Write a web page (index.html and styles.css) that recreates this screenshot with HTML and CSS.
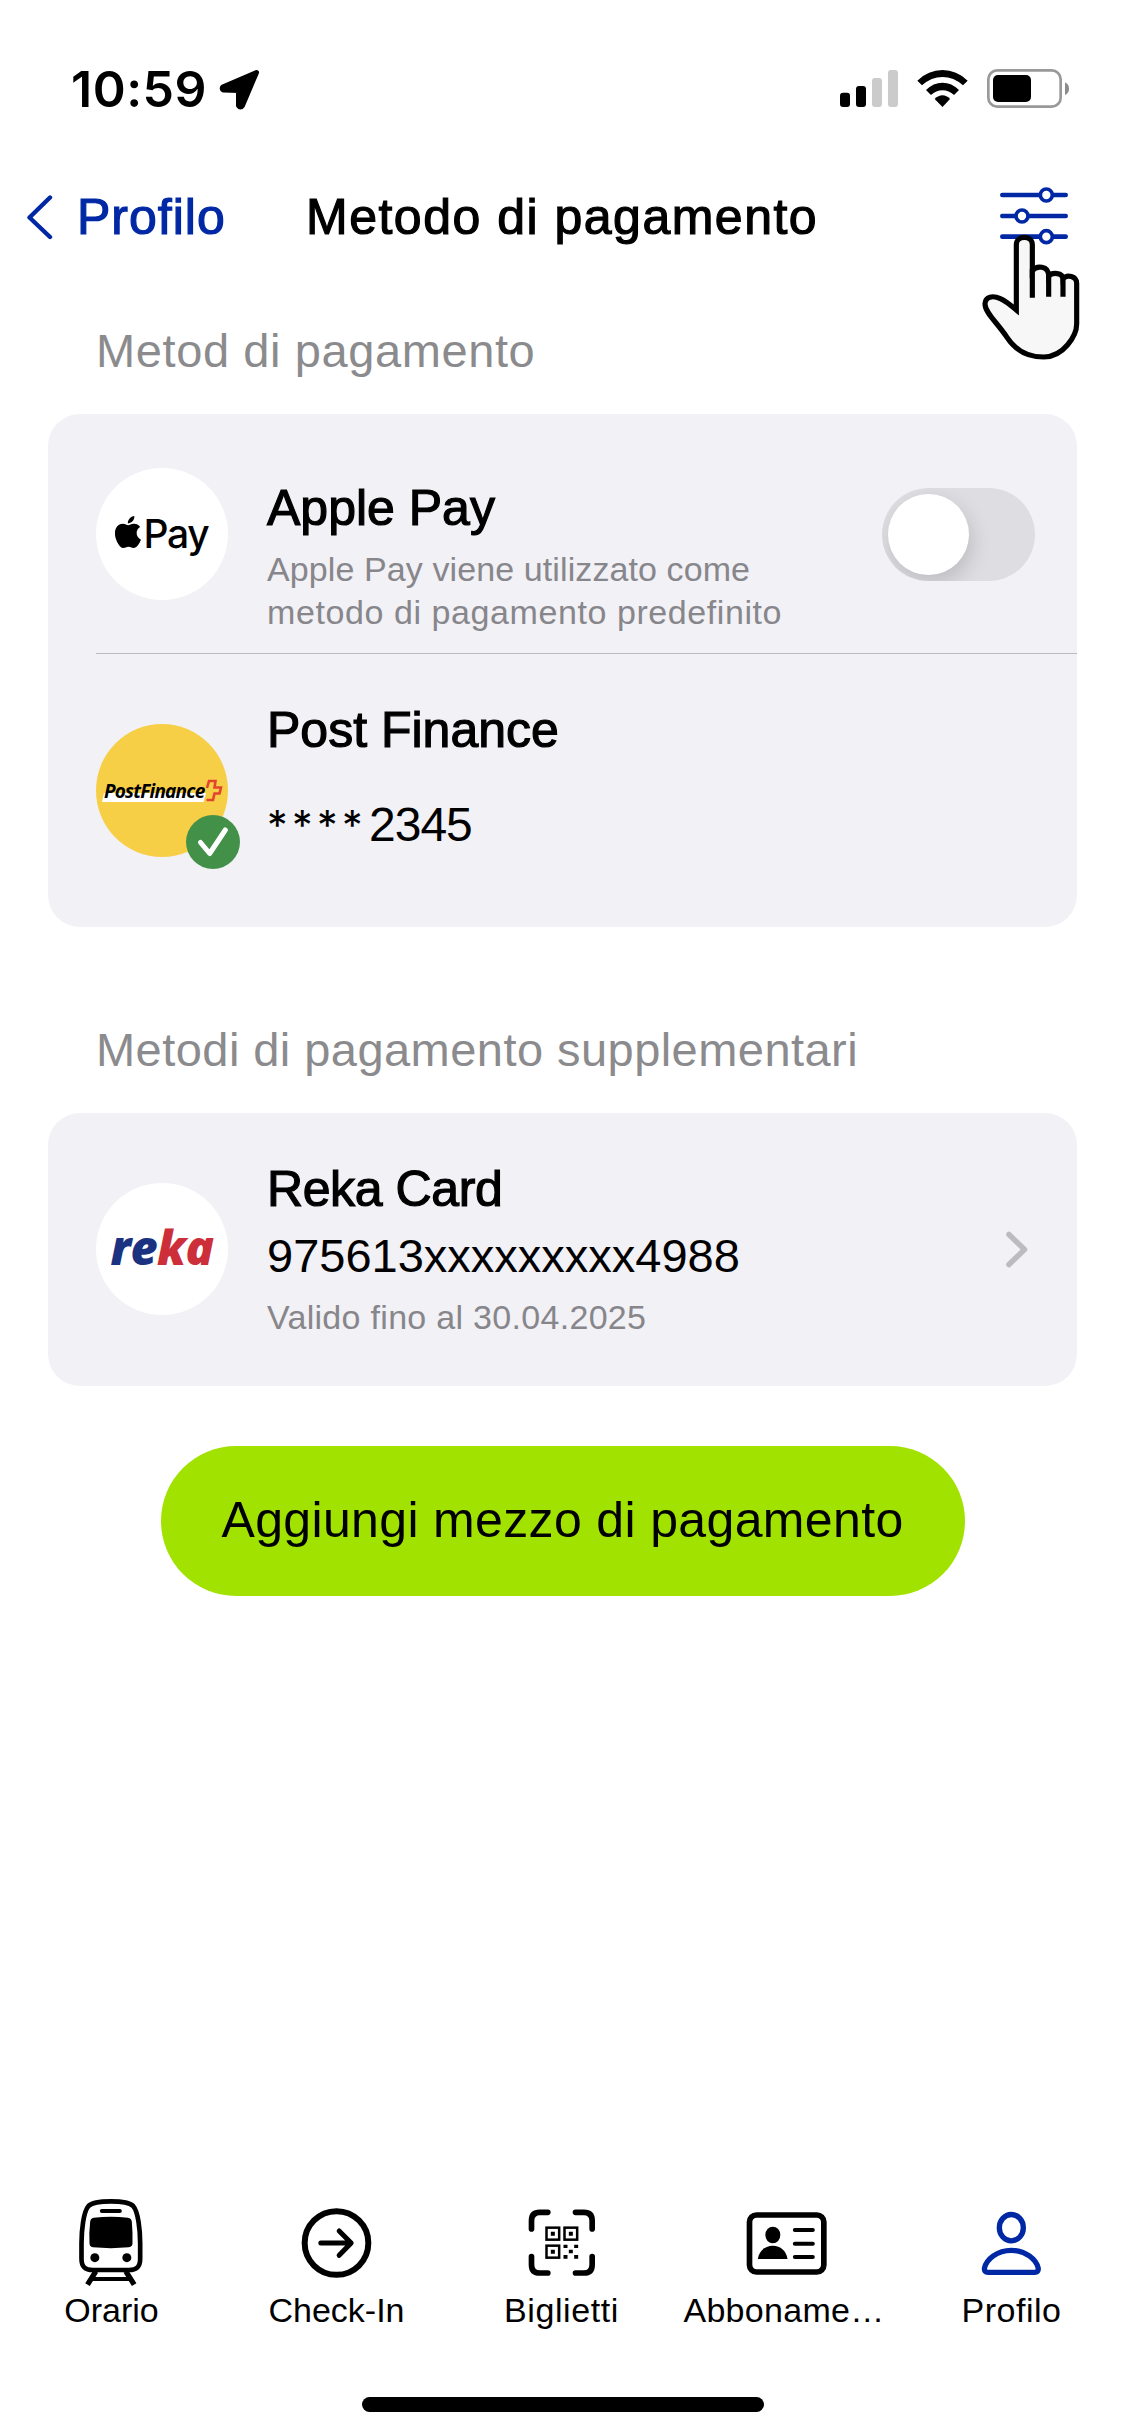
FILE: index.html
```html
<!DOCTYPE html>
<html lang="it">
<head>
<meta charset="utf-8">
<title>Metodo di pagamento</title>
<link rel="stylesheet" href="styles.css">
</head>
<body>
<div class="screen">
  <header class="status">
    <span class="time">10:59</span>
    <svg class="locate" width="41" height="41" viewBox="219 69 41 41"><path d="M256.500 72.500 L222.700 87 Q221.500 89 223.500 90 L238.500 90.500 V105.500 Q240.500 108.500 242.500 105.500Z" fill="#000" stroke="#000" stroke-width="5" stroke-linejoin="round"/></svg>
    <svg class="signal" width="58" height="37" viewBox="120 90 174 111"><g fill="#000"><rect x="120" y="158" width="30" height="43" rx="9"/><rect x="168" y="138" width="30" height="63" rx="9"/></g><g fill="#cbcbcb"><rect x="216" y="114" width="30" height="87" rx="9"/><rect x="264" y="90" width="30" height="111" rx="9"/></g></svg>
    <svg class="wifi" width="51" height="37" viewBox="351 90 153 111"><path d="M352 122 Q385 90 427.500 90 T503 122 L489 136 Q461 111 427.500 111 T366 136Z"/><path d="M378 150 Q400 128 427.500 128 T477 150 L462 165 Q447 151 427.500 151 T393 165Z"/><path d="M404 177 Q415 166 427.500 166 T450 177 L427.500 201Z"/></svg>
    <svg width="83" height="39" viewBox="561 87 249 117"><rect x="565" y="91" width="217" height="109" rx="27" fill="none" stroke="#999" stroke-width="8"/><rect x="579" y="105" width="114" height="81" rx="15"/><path d="M795 127 Q807 133 807 146 T795 165Z" fill="#8c8c8c"/></svg>
  </header>

  <nav class="navbar">
    <a class="back">
      <svg width="28" height="46" viewBox="25 193 28 46"><path d="M50 196.500 L29.500 216.500 L50 236" fill="none" stroke="#0028a5" stroke-width="4.400" stroke-linecap="round" stroke-linejoin="round"/></svg>
      <span>Profilo</span>
    </a>
    <h1>Metodo di pagamento</h1>
    <div class="filter">
      <svg width="68" height="58" viewBox="600 439 204 174"><g fill="#fff" stroke="#0028a5" stroke-width="14" stroke-linecap="round"><path d="M607 463H797M607 526H797M607 588H797"/><g stroke-width="11"><circle cx="739" cy="463" r="18"/><circle cx="666" cy="526" r="18"/><circle cx="739" cy="588" r="18"/></g></g></svg>
      <svg class="pointer" width="98" height="127" viewBox="545 580 294 381"><g stroke="#000" stroke-width="15.500"><path fill="#f7f7f7" stroke-miterlimit="6" d="M648 808 V612 C648 583 696 583 696 612 V690 C708 674 745 674 745 706 C756 694 787 696 788 714 C800 700 829 706 829 728 V850 C829 884 790 949 730 949 C675 949 641 922 620 890 C590 845 553 815 554 789 C555 768 577 763 600 774 C618 782 636 798 648 808Z"/><path fill="none" d="M696 685V771M745 700V768M788 708V768"/></g></svg>
    </div>
  </nav>

  <section>
    <h2 class="first">Metod di pagamento</h2>
    <div class="card">
      <div class="row apple">
        <div class="logo applepay">
          <svg width="26" height="32" viewBox="2.300 0 19.500 24"><path d="M12.152 6.896c-.948 0-2.415-1.078-3.96-1.04-2.04.027-3.91 1.183-4.961 3.014-2.117 3.675-.546 9.103 1.519 12.09 1.013 1.454 2.208 3.09 3.792 3.039 1.520-.065 2.090-.987 3.935-.987 1.831 0 2.350.987 3.960.948 1.637-.026 2.676-1.480 3.676-2.948 1.156-1.688 1.636-3.325 1.662-3.415-.039-.013-3.182-1.221-3.220-4.857-.026-3.040 2.480-4.494 2.597-4.559-1.429-2.090-3.623-2.324-4.390-2.376-2-.156-3.675 1.090-4.610 1.090zM15.530 3.830c.843-1.012 1.400-2.427 1.245-3.830-1.207.052-2.662.805-3.532 1.818-.780.896-1.454 2.338-1.273 3.714 1.338.104 2.715-.688 3.559-1.701"/></svg>
          <span>Pay</span>
        </div>
        <div class="info">
          <h3>Apple Pay</h3>
          <p class="note"><span class="tight">Apple Pay viene utilizzato come</span><span class="loose">metodo di pagamento predefinito</span></p>
        </div>
        <div class="toggle"><div class="knob"></div></div>
      </div>
      <div class="row">
        <div class="logo postfinance">
          <svg class="plate" width="104" height="9" viewBox="0 0 104 9"><path d="M2 0H104L101.500 9H0Z" fill="#fff"/></svg>
          <span>PostFinance</span>
          <svg class="cross" width="18" height="23" viewBox="0 0 18 23"><path d="M2 9 L4 2 H10.500 L9.500 8.500 H16 L14.500 14.500 H9.500 L8 21 H1.500" fill="none" stroke="#e2452f" stroke-width="2.600"/></svg>
          <svg class="check" width="54" height="54" viewBox="0 0 54 54"><circle cx="27" cy="27" r="27" fill="#439149"/><path d="M14.500 27.500 L23.700 38.500 L39.300 15" fill="none" stroke="#fff" stroke-width="5" stroke-linecap="round" stroke-linejoin="round"/></svg>
        </div>
        <div class="info">
          <h3>Post Finance</h3>
          <p class="number masked"><span class="stars">****</span>2345</p>
        </div>
      </div>
    </div>
  </section>

  <section>
    <h2>Metodi di pagamento supplementari</h2>
    <div class="card">
      <div class="row">
        <div class="logo reka"><span><b class="re">re</b><b class="ka">ka</b></span></div>
        <div class="info">
          <h3 class="narrow">Reka Card</h3>
          <p class="number">975613xxxxxxxxx4988</p>
          <p class="note valid">Valido fino al 30.04.2025</p>
        </div>
        <svg class="chevron" width="22" height="37" viewBox="0 0 22 37"><path d="M3 3.500 L18.500 18.500 L3 33.500" fill="none" stroke="#bcbbc0" stroke-width="5.500" stroke-linecap="round" stroke-linejoin="round"/></svg>
      </div>
    </div>
  </section>

  <button class="add">Aggiungi mezzo di pagamento</button>

  <footer class="tabs">
    <a class="tab">
      <svg width="90" height="92" viewBox="82.500 48 270 276"><g fill="none" stroke="#000" stroke-width="14"><path d="M214 64 C250 64 270 67 281 78 C296 95 302 150 302 190 V236 C302 260 292 270 268 270 H160 C136 270 126 260 126 236 V190 C126 150 132 95 147 78 C158 67 178 64 214 64Z"/><path d="M187 93H241" stroke-linecap="round" stroke-width="12"/><path d="M169 274L144 314M259 274L284 314" stroke-width="16"/><path d="M157 297H271" stroke-width="12"/></g><path d="M163 113 Q214 108 265 113 Q276 114 277 125 Q280 160 279 190 Q279 200 268 202 Q214 207 160 202 Q150 200 150 190 Q148 160 152 125 Q153 114 163 113Z"/><circle cx="166" cy="233" r="13.500"/><circle cx="262" cy="233" r="13.500"/></svg>
      <span>Orario</span>
    </a>
    <a class="tab">
      <svg width="90" height="92" viewBox="757.500 48 270 276"><g fill="none" stroke="#000" stroke-width="18" stroke-linecap="round"><circle cx="891" cy="189" r="95.500"/><path d="M844 189H933M899 153L935 189L899 226" stroke-width="15" stroke-linejoin="round"/></g></svg>
      <span>Check-In</span>
    </a>
    <a class="tab t3">
      <svg width="90" height="92" viewBox="172.500 48 270 276"><g fill="none" stroke="#000"><path d="M216 147V122Q216 97 241 97H265M348 97H373Q398 97 398 122V147M216 230V254Q216 279 241 279H265M348 279H373Q398 279 398 254V230" stroke-width="17" stroke-linecap="round"/><g stroke-width="7.500"><rect x="261" y="143" width="38" height="36"/><rect x="315" y="143" width="38" height="36"/><rect x="261" y="197" width="38" height="36"/></g></g><path d="M274 155h12v12h-12zM328 155h12v12h-12zM274 209h12v12h-12zM312 194h12v10h-12zM344 194h12v10h-12zM328 209h12v11h-12zM312 225h12v11h-12zM344 225h12v11h-12z"/></svg>
      <span>Biglietti</span>
    </a>
    <a class="tab t4">
      <svg width="90" height="92" viewBox="847.500 48 270 276"><rect x="870" y="105" width="223" height="171" rx="21" fill="none" stroke="#000" stroke-width="17"/><ellipse cx="940" cy="165" rx="22.500" ry="25"/><path d="M895 237 C898 213 917 197 940 197 S981 213 984 237Z"/><path d="M1006 150H1060M1006 191H1060M1006 231H1060" stroke="#000" stroke-width="12" stroke-linecap="round"/></svg>
      <span>Abboname…</span>
    </a>
    <a class="tab t5">
      <svg width="90" height="92" viewBox="202.500 48 270 276"><g fill="none" stroke="#0028a5" stroke-width="16"><ellipse cx="335.500" cy="143" rx="36" ry="39.500"/><path d="M335.500 211 C378 211 410 238 416 264 Q418 277 405 277 H266 Q253 277 255 264 C261 238 293 211 335.500 211Z"/></g></svg>
      <span>Profilo</span>
    </a>
  </footer>
  <div class="home"></div>
</div>
</body>
</html>
```
FILE: styles.css
```css
* { box-sizing: border-box; margin: 0; padding: 0; }

body {
  background: #fff;
  color: #000;
  font-family: "Liberation Sans", Arial, sans-serif;
}

svg { display: block; flex: none; }

.screen {
  width: 1125px;
  height: 2436px;
  display: flex;
  flex-direction: column;
  overflow: hidden;
}

/* Status bar */
.status {
  height: 177px;
  flex: none;
  display: flex;
  align-items: center;
  padding: 0 55px 0 71px;
}
.time { width: 148px; font: 600 50px/60px Inter, sans-serif; letter-spacing: 0.5px; }
.locate { margin-top: 2px; }
.signal { margin-left: auto; }
.wifi { margin: 0 19px; }

/* Navigation bar */
.navbar {
  height: 80px;
  flex: none;
  display: grid;
  grid-template-columns: 306px 1fr 125px;
  align-items: center;
}
.back {
  display: flex;
  align-items: center;
  gap: 24px;
  padding-left: 25px;
  color: #0028a5;
  font-size: 50px;
  line-height: 60px;
  letter-spacing: 1px;
  -webkit-text-stroke: 1.2px;
}
h1 {
  font-size: 50px;
  font-weight: 400;
  line-height: 60px;
  letter-spacing: 1.5px;
  -webkit-text-stroke: 1.2px;
  white-space: nowrap;
}
.filter { position: relative; margin-top: -3px; }
.pointer { position: absolute; left: -18px; top: 47px; }

/* Sections */
h2 {
  padding: 93px 0 33px 96px;
  color: #8b8b8e;
  font-size: 47px;
  font-weight: 400;
  line-height: 60px;
  letter-spacing: 0.45px;
}
h2.first { padding-top: 64px; letter-spacing: 0.6px; }

.card {
  margin: 0 48px;
  border-radius: 32px;
  background: #f2f1f6;
}
.row {
  height: 273px;
  margin-left: 48px;
  display: flex;
  align-items: flex-start;
  gap: 39px;
}
.row.apple { height: 240px; border-bottom: 1px solid #bcbbc0; }

.logo {
  position: relative;
  flex: none;
  width: 132px;
  height: 132px;
  margin-top: 70px;
  border-radius: 50%;
  background: #fff;
  display: flex;
  align-items: center;
  justify-content: center;
}
.apple .logo { margin-top: 54px; }
.applepay { gap: 2px; }
.applepay svg { margin-top: -4px; }
.applepay span { font: 500 39px/40px Inter, sans-serif; letter-spacing: -1.2px; }

.postfinance { height: 133px; background: #f7cf47; justify-content: flex-start; }
.postfinance span {
  position: relative;
  margin-left: 8px;
  font: italic 700 19px/24px "Open Sans", sans-serif;
  letter-spacing: -0.8px;
}
.plate { position: absolute; left: 6px; top: 69px; }
.cross { position: absolute; left: 109px; top: 55px; }
.check { position: absolute; left: 90px; top: 91px; }

.reka span { margin-top: -4px; font: italic 800 47px/56px "Open Sans", sans-serif; letter-spacing: -0.6px; }
.reka b { font-weight: inherit; }
.re { color: #1a327f; }
.ka { color: #cc2f3a; }

.info { flex: 1; padding-top: 46px; }
.apple .info { padding-top: 64px; }
h3 {
  font-size: 50px;
  font-weight: 400;
  line-height: 60px;
  -webkit-text-stroke: 1.2px;
}
h3.narrow { letter-spacing: -0.4px; }
.number { margin-top: 7px; font-size: 47px; line-height: 60px; }
.masked { margin-top: 35px; display: flex; font-size: 48px; letter-spacing: -1px; }
.stars { width: 102px; font-family: Inter, sans-serif; font-size: 41px; letter-spacing: 4.5px; }
.note { margin-top: 10px; color: #87868b; font-size: 34px; line-height: 43px; }
.note span { display: block; }
.tight { letter-spacing: 0.1px; }
.loose { letter-spacing: 0.58px; }
.valid { letter-spacing: 0.3px; }

.toggle {
  width: 153px;
  height: 93px;
  margin: 74px 42px 0 0;
  padding: 6px;
  border-radius: 47px;
  background: #dedde2;
  overflow: hidden;
}
.knob {
  width: 81px;
  height: 81px;
  border-radius: 50%;
  background: #fff;
  box-shadow: 3px 8px 20px rgba(0, 0, 0, 0.15);
}
.chevron { align-self: center; margin-right: 49px; }

.add {
  flex: none;
  align-self: center;
  width: 804px;
  height: 150px;
  margin-top: 60px;
  padding-bottom: 3px;
  border: 0;
  border-radius: 75px;
  background: #a1e200;
  color: #000;
  font: 50px/60px "Liberation Sans", Arial, sans-serif;
  letter-spacing: 0.35px;
}

/* Tab bar */
.tabs {
  margin: auto 1px 0 -1px;
  display: grid;
  grid-template-columns: repeat(5, 225px);
}
.tab {
  display: flex;
  flex-direction: column;
  align-items: center;
  gap: 2px;
  font-size: 34px;
  line-height: 40px;
}
.t3 { letter-spacing: 0.6px; }
.t4 { letter-spacing: 0.3px; }
.t4 span { margin-right: 5px; }
.t5 { letter-spacing: 0.5px; }

.home {
  flex: none;
  align-self: center;
  width: 402px;
  height: 15px;
  margin: 67px 0 24px;
  border-radius: 8px;
  background: #000;
}
```
